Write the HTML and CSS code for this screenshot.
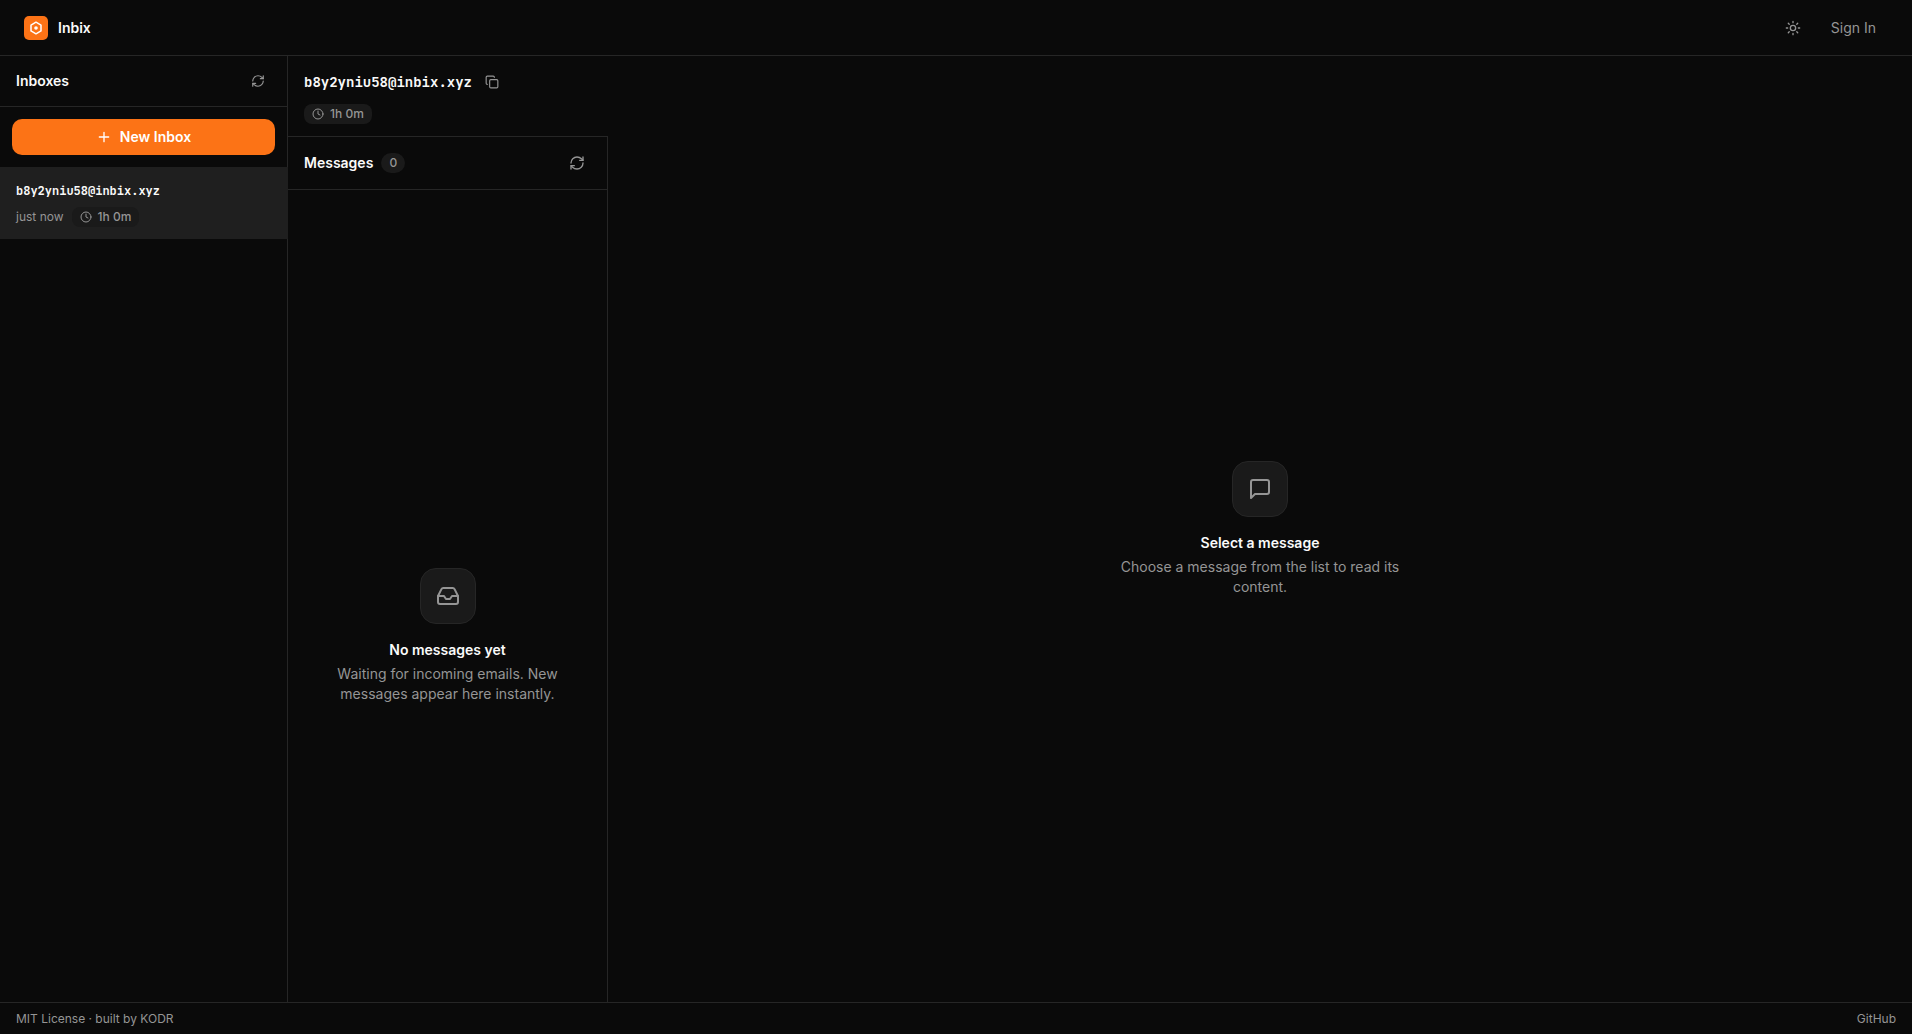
FILE: index.html
```html
<!DOCTYPE html>
<html lang="en">
<head>
    <meta charset="UTF-8">
    <meta name="viewport" content="width=device-width, initial-scale=1.0">
    <title>Inbix</title>
    <link rel="stylesheet" href="styles.css">
</head>
<body>
    <header class="topbar">
        <a href="#" class="brand">
            <span class="logo">
                <svg width="14" height="14" viewBox="0 0 14 14" fill="none" stroke="currentColor" stroke-width="1.5" stroke-linejoin="round"><path d="M7 1.2l5 2.9v5.8l-5 2.9-5-2.9V4.1z"/><circle cx="7" cy="7" r="1.8" fill="currentColor" stroke="none"/></svg>
            </span>
            Inbix
        </a>
        <nav class="topbar-nav">
            <button class="icon-btn" aria-label="Toggle theme">
                <svg class="icon" width="16" height="16" viewBox="0 0 24 24"><circle cx="12" cy="12" r="4"/><path d="M12 2v2M12 20v2M4.93 4.93l1.41 1.41M17.66 17.66l1.41 1.41M2 12h2M20 12h2M6.34 17.66l-1.41 1.41M19.07 4.93l-1.41 1.41"/></svg>
            </button>
            <a href="#" class="sign-in">Sign In</a>
        </nav>
    </header>

    <main class="app">
        <aside class="sidebar">
            <div class="sidebar-head">
                <h2>Inboxes</h2>
                <button class="icon-btn icon-btn-sm" aria-label="Refresh inboxes">
                    <svg class="icon" width="14" height="14" viewBox="0 0 24 24"><path d="M3 12a9 9 0 0 1 9-9 9.75 9.75 0 0 1 6.74 2.74L21 8"/><path d="M21 3v5h-5"/><path d="M21 12a9 9 0 0 1-9 9 9.75 9.75 0 0 1-6.74-2.74L3 16"/><path d="M8 16H3v5"/></svg>
                </button>
            </div>
            <div class="sidebar-action">
                <button class="new-inbox">
                    <svg class="icon" width="16" height="16" viewBox="0 0 24 24"><path d="M5 12h14M12 5v14"/></svg>
                    New Inbox
                </button>
            </div>
            <a href="#" class="inbox-item">
                <span class="inbox-address">b8y2yniu58@inbix.xyz</span>
                <span class="inbox-meta">
                    <span>just now</span>
                    <span class="pill">
                        <svg class="icon" width="12" height="12" viewBox="0 0 24 24"><circle cx="12" cy="12" r="10"/><path d="M12 6v6l4 2"/></svg>
                        1h 0m
                    </span>
                </span>
            </a>
        </aside>

        <section class="inbox">
            <div class="inbox-head">
                <div class="inbox-title">
                    <h1>b8y2yniu58@inbix.xyz</h1>
                    <button class="icon-btn" aria-label="Copy address">
                        <svg class="icon" width="14" height="14" viewBox="0 0 24 24"><rect x="8" y="8" width="14" height="14" rx="2"/><path d="M4 16c-1.1 0-2-.9-2-2V4c0-1.1.9-2 2-2h10c1.1 0 2 .9 2 2"/></svg>
                    </button>
                </div>
                <span class="pill">
                    <svg class="icon" width="12" height="12" viewBox="0 0 24 24"><circle cx="12" cy="12" r="10"/><path d="M12 6v6l4 2"/></svg>
                    1h 0m
                </span>
            </div>
            <div class="messages">
                <div class="messages-head">
                    <h2>Messages</h2>
                    <span class="count">0</span>
                    <button class="icon-btn" aria-label="Refresh messages">
                        <svg class="icon" width="16" height="16" viewBox="0 0 24 24"><path d="M3 12a9 9 0 0 1 9-9 9.75 9.75 0 0 1 6.74 2.74L21 8"/><path d="M21 3v5h-5"/><path d="M21 12a9 9 0 0 1-9 9 9.75 9.75 0 0 1-6.74-2.74L3 16"/><path d="M8 16H3v5"/></svg>
                    </button>
                </div>
                <div class="empty">
                    <div class="empty-icon">
                        <svg class="icon" width="24" height="24" viewBox="0 0 24 24"><path d="M22 12h-6l-2 3h-4l-2-3H2"/><path d="M5.45 5.11L2 12v6a2 2 0 0 0 2 2h16a2 2 0 0 0 2-2v-6l-3.45-6.89A2 2 0 0 0 16.76 4H7.24a2 2 0 0 0-1.79 1.11z"/></svg>
                    </div>
                    <h3>No messages yet</h3>
                    <p>Waiting for incoming emails. New messages appear here instantly.</p>
                </div>
            </div>
        </section>

        <section class="reader">
            <div class="empty">
                <div class="empty-icon">
                    <svg class="icon" width="24" height="24" viewBox="0 0 24 24"><path d="M21 15a2 2 0 0 1-2 2H7l-4 4V5a2 2 0 0 1 2-2h14a2 2 0 0 1 2 2z"/></svg>
                </div>
                <h3>Select a message</h3>
                <p>Choose a message from the list to read its content.</p>
            </div>
        </section>
    </main>

    <footer class="footer">
        <span>MIT License · built by <a href="#">KODR</a></span>
        <a href="#">GitHub</a>
    </footer>
</body>
</html>
```
FILE: styles.css
```css
:root {
    --bg: #0a0a0a;
    --surface: #1a1a1a;
    --active: #1f1f1f;
    --border: #262626;
    --text: #fafafa;
    --muted: #959595;
    --accent: #fc7316;
}
* {
    box-sizing: border-box;
    margin: 0;
    padding: 0;
}
body {
    display: flex;
    flex-direction: column;
    height: 100vh;
    background: var(--bg);
    color: var(--text);
    font-family: Inter, "Liberation Sans", sans-serif;
    font-size: 14px;
    line-height: 20px;
    overflow: hidden;
}
a {
    color: inherit;
    text-decoration: none;
}
button {
    border: none;
    background: none;
    color: inherit;
    font: inherit;
    cursor: pointer;
}
h1, h2, h3 {
    font-size: 14px;
    font-weight: 600;
}
.icon {
    display: block;
    flex: none;
    fill: none;
    stroke: currentColor;
    stroke-width: 2;
    stroke-linecap: round;
    stroke-linejoin: round;
}
.icon-btn {
    display: flex;
    align-items: center;
    justify-content: center;
    width: 28px;
    height: 28px;
    border-radius: 6px;
    color: var(--muted);
}
.icon-btn-sm {
    width: 26px;
    height: 26px;
}

/* top bar */
.topbar {
    display: flex;
    align-items: center;
    justify-content: space-between;
    flex: none;
    height: 56px;
    padding: 0 24px;
    border-bottom: 1px solid var(--border);
}
.brand {
    display: flex;
    align-items: center;
    gap: 10px;
    font-weight: 600;
}
.logo {
    display: flex;
    align-items: center;
    justify-content: center;
    width: 24px;
    height: 24px;
    border-radius: 5px;
    background: var(--accent);
    color: #fff;
}
.topbar-nav {
    display: flex;
    align-items: center;
    gap: 12px;
    color: var(--muted);
}
.sign-in {
    padding: 6px 12px;
}

/* sidebar */
.app {
    display: flex;
    flex: 1;
    min-height: 0;
}
.sidebar {
    flex: none;
    width: 288px;
    border-right: 1px solid var(--border);
}
.sidebar-head {
    display: flex;
    align-items: center;
    justify-content: space-between;
    padding: 12px 16px;
    border-bottom: 1px solid var(--border);
}
.sidebar-action {
    padding: 12px;
}
.new-inbox {
    display: flex;
    align-items: center;
    justify-content: center;
    gap: 8px;
    width: 100%;
    height: 36px;
    border-radius: 10px;
    background: var(--accent);
    color: #fff;
    font-weight: 600;
}
.inbox-item {
    display: block;
    margin-right: -1px;
    padding: 14px 16px 12px;
    background: var(--active);
}
.inbox-address {
    display: block;
    margin-bottom: 6px;
    font-family: "JetBrains Mono", "Liberation Mono", monospace;
    font-size: 12px;
    font-weight: 700;
}
.inbox-meta {
    display: flex;
    align-items: center;
    gap: 8px;
    color: var(--muted);
    font-size: 12px;
}
.pill {
    display: inline-flex;
    align-items: center;
    gap: 6px;
    height: 20px;
    padding: 0 8px;
    border-radius: 8px;
    background: var(--surface);
    color: var(--muted);
    font-size: 12px;
    font-weight: 500;
}

/* inbox column */
.inbox {
    flex: none;
    width: 320px;
    overflow: hidden;
}
.inbox-head {
    height: 80px;
    padding: 12px 16px;
}
.inbox-title {
    display: flex;
    align-items: center;
    gap: 6px;
    margin-bottom: 8px;
}
.inbox-title h1 {
    font-family: "JetBrains Mono", "Liberation Mono", monospace;
    font-weight: 700;
}
.messages {
    display: flex;
    flex-direction: column;
    height: 100%;
    border: 1px solid var(--border);
    border-width: 1px 1px 0 0;
}
.messages-head {
    display: flex;
    align-items: center;
    gap: 8px;
    padding: 12px 16px;
    border-bottom: 1px solid var(--border);
}
.messages-head .icon-btn {
    margin-left: auto;
}
.count {
    width: 24px;
    border-radius: 10px;
    background: var(--surface);
    color: var(--muted);
    font-size: 12px;
    font-weight: 500;
    text-align: center;
}

/* empty states */
.reader {
    display: flex;
    flex: 1;
    min-width: 0;
}
.empty {
    display: flex;
    flex: 1;
    flex-direction: column;
    align-items: center;
    justify-content: center;
    padding: 0 16px;
    text-align: center;
}
.empty-icon {
    display: flex;
    align-items: center;
    justify-content: center;
    width: 56px;
    height: 56px;
    margin-bottom: 16px;
    border: 1px solid var(--border);
    border-radius: 16px;
    background: var(--surface);
    color: var(--muted);
}
.empty h3 {
    margin-bottom: 4px;
}
.empty p {
    max-width: 280px;
    color: var(--muted);
}

/* footer */
.footer {
    display: flex;
    align-items: center;
    justify-content: space-between;
    flex: none;
    height: 32px;
    padding: 0 16px;
    border-top: 1px solid var(--border);
    color: var(--muted);
    font-size: 12px;
}
```
